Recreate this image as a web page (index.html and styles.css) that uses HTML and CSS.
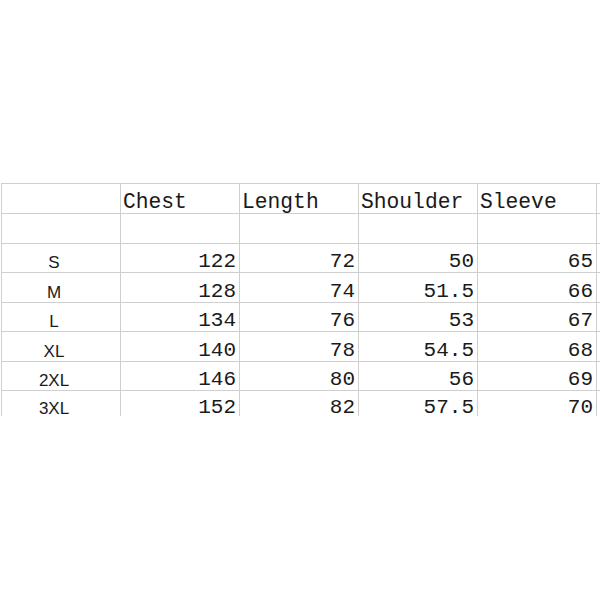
FILE: index.html
```html
<!DOCTYPE html>
<html>
<head>
<meta charset="utf-8">
<link rel="stylesheet" href="styles.css">
</head>
<body>
<div class="sheet">
  <div class="c"></div><div class="c h">Chest</div><div class="c h">Length</div><div class="c h">Shoulder</div><div class="c h">Sleeve</div><div class="c"></div>
  <div class="c"></div><div class="c"></div><div class="c"></div><div class="c"></div><div class="c"></div><div class="c"></div>
  <div class="c lab">S</div><div class="c n">122</div><div class="c n">72</div><div class="c n">50</div><div class="c n">65</div><div class="c"></div>
  <div class="c lab">M</div><div class="c n">128</div><div class="c n">74</div><div class="c n">51.5</div><div class="c n">66</div><div class="c"></div>
  <div class="c lab">L</div><div class="c n">134</div><div class="c n">76</div><div class="c n">53</div><div class="c n">67</div><div class="c"></div>
  <div class="c lab">XL</div><div class="c n">140</div><div class="c n">78</div><div class="c n">54.5</div><div class="c n">68</div><div class="c"></div>
  <div class="c lab">2XL</div><div class="c n">146</div><div class="c n">80</div><div class="c n">56</div><div class="c n">69</div><div class="c"></div>
  <div class="c lab last">3XL</div><div class="c n last">152</div><div class="c n last">82</div><div class="c n last">57.5</div><div class="c n last">70</div><div class="c"></div>
</div>
</body>
</html>
```

FILE: styles.css
```css
html, body {
  margin: 0;
  padding: 0;
  background: #ffffff;
  overflow: hidden;
}
.sheet {
  margin: 183px 0 0 1px;
  width: 599px;
  box-sizing: border-box;
  padding: 1px 0 0 1px;
  background: #cfcfcf;
  display: grid;
  grid-template-columns: 118px 118px 118px 118px 118px 1fr;
  grid-template-rows: 29px 29px 28px 29px 28px 29px 28px 25px;
  gap: 1px;
}
.c {
  background: #ffffff;
  display: flex;
  align-items: flex-end;
  color: #1a1a1a;
  min-width: 0;
  white-space: nowrap;
}
.h {
  font-family: "Liberation Mono", monospace;
  font-size: 21.3px;
  line-height: 21px;
  padding-left: 2px;
}
.n {
  font-family: "Liberation Mono", monospace;
  font-size: 21px;
  line-height: 21px;
  justify-content: flex-end;
  padding-right: 3px;
}
.lab {
  font-family: "Liberation Sans", Arial, sans-serif;
  font-size: 17px;
  line-height: 19px;
  justify-content: center;
  padding-right: 14px;
}
.n.last {
  line-height: 16px;
}
.lab.last {
  line-height: 15px;
}
```
